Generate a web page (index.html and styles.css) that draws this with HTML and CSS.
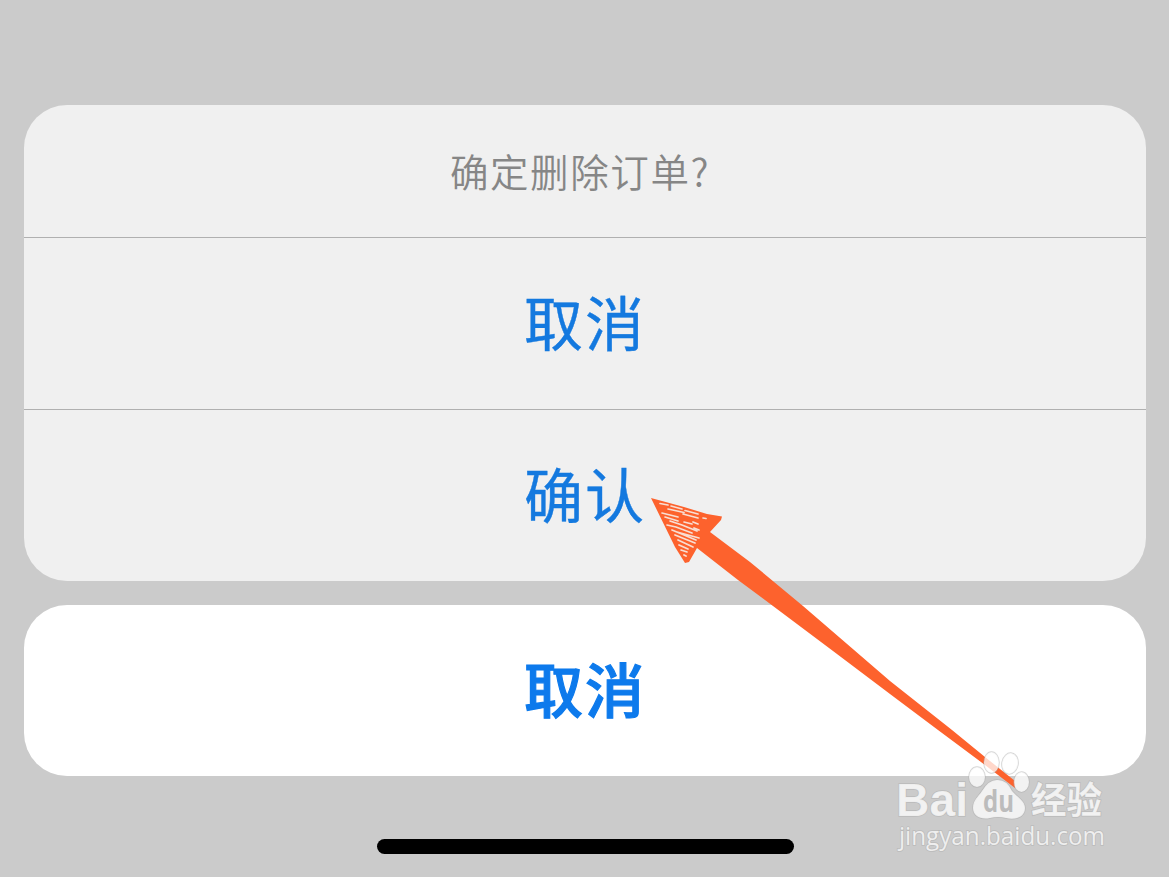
FILE: index.html
```html
<!DOCTYPE html>
<html lang="zh-CN">
<head>
    <meta charset="UTF-8">
    <title>确定删除订单?</title>
    <link rel="stylesheet" href="styles.css">
</head>
<body>

<div class="screen">
    <div class="sheet">
        <div class="sheet-title">确定删除订单?</div>
        <button class="action">取消</button>
        <button class="action">确认</button>
    </div>
    <button class="action cancel">取消</button>
    <div class="home-bar"></div>

    <svg class="overlay" viewBox="0 0 1169 877">
        <!-- arrow -->
        <path class="arrow" d="M651 498 L684 507 L707 514 L722 516.5 L721 520 L710 532 L750 562 L803 606 L890 681 L952 730 L985 757 L1015 781 L1015 788 L985 765 L938 730 L890 694 L833 651 L773 606 L738 580 L697 548 L689 562 L685 563 L675 547 Z"/>
        <path class="scratch" d="M660 503.500L668 505M671 506L682 509M685 510.500L698 514M662 513L678 517M668 509L684 512.500M683 514L698 518M665 517L678 521M684 522L692 524M703 518L706 518.500M670 521L682 525L697 531M667 525L676 527L692 533M677 532L699 538M672 530L696 540M675 535L695 543M678 540L693 547M679 545L688 549M681 550L687 552M684 555L686 556M693 522L698 524M694 528L699 530"/>

        <!-- watermark -->
        <g class="mark">
            <ellipse cx="977" cy="777" rx="8" ry="10"/>
            <ellipse cx="991.500" cy="762.500" rx="7.500" ry="10.500"/>
            <ellipse cx="1010" cy="763.500" rx="8" ry="10.500" transform="rotate(10 1010 763.5)"/>
            <ellipse cx="1021.500" cy="782" rx="7.500" ry="10"/>
            <path d="M982 791 Q989 779 998 780 Q1007 780 1012 791 C1017 797 1025 801 1025 808 C1025 818 1014 820 1006 818 Q998 816 990 818 C981 820 973 816 973 808 C973 800 978 797 982 791 Z"/>
            <text class="brand" x="896" y="816" textLength="72" lengthAdjust="spacingAndGlyphs">Bai</text>
            <text class="du" x="983" y="812" textLength="31" lengthAdjust="spacingAndGlyphs">du</text>
            <text class="name" x="1031" y="814" textLength="71" lengthAdjust="spacingAndGlyphs">经验</text>
            <text class="site" x="899" y="844.500" textLength="206" lengthAdjust="spacingAndGlyphs">jingyan.baidu.com</text>
        </g>
    </svg>
</div>

</body>
</html>
```

FILE: styles.css
```css
* {
    box-sizing: border-box;
}

body {
    margin: 0;
    background: #cbcbcb;
    font-family: "Noto Sans CJK SC", sans-serif;
}

.screen {
    position: relative;
    display: flex;
    flex-direction: column;
    width: 1169px;
    height: 877px;
    padding: 105px 23px 23px 24px;
    overflow: hidden;
}

.sheet {
    height: 476px;
    border-radius: 43px;
    background: #f0f0f0;
    overflow: hidden;
}

.sheet-title {
    height: 132px;
    padding-right: 10px;
    color: #868686;
    font-size: 38.5px;
    font-weight: 350;
    letter-spacing: 1.6px;
    line-height: 131px;
    text-align: center;
}

.action {
    display: block;
    width: 100%;
    height: 172px;
    padding: 0 0 6px;
    border: none;
    border-top: 1px solid #b0b0b0;
    background: none;
    color: #1479df;
    font-family: inherit;
    font-size: 59px;
    letter-spacing: 2px;
    line-height: 165px;
    text-align: center;
    -webkit-text-stroke: 0.4px #1479df;
}

.cancel {
    height: 171px;
    margin-top: 24px;
    border: none;
    border-radius: 43px;
    background: #fff;
    color: #0d7aec;
    font-weight: 500;
    -webkit-text-stroke: 1.2px #0d7aec;
}

.home-bar {
    width: 417px;
    height: 15px;
    margin: 63px auto 0;
    border-radius: 8px;
    background: #000;
}

.overlay {
    position: absolute;
    inset: 0;
    width: 100%;
    height: 100%;
    pointer-events: none;
}

.arrow {
    fill: #fd622d;
}

.scratch {
    fill: none;
    stroke: #f8ded3;
    stroke-width: 1.7;
    stroke-linecap: round;
}

.mark {
    fill: #fff;
    fill-opacity: 0.75;
    stroke: #aaa;
    stroke-opacity: 0.5;
    stroke-width: 1.5;
    paint-order: stroke;
}

.brand {
    font: bold 46px "Liberation Sans", sans-serif;
}

.du {
    fill: #bcbcbc;
    fill-opacity: 1;
    stroke: none;
    font: bold 31px "Open Sans", sans-serif;
}

.name {
    font: bold 37px "Noto Sans CJK SC", sans-serif;
}

.site {
    font: 26px "Open Sans", sans-serif;
}
```
